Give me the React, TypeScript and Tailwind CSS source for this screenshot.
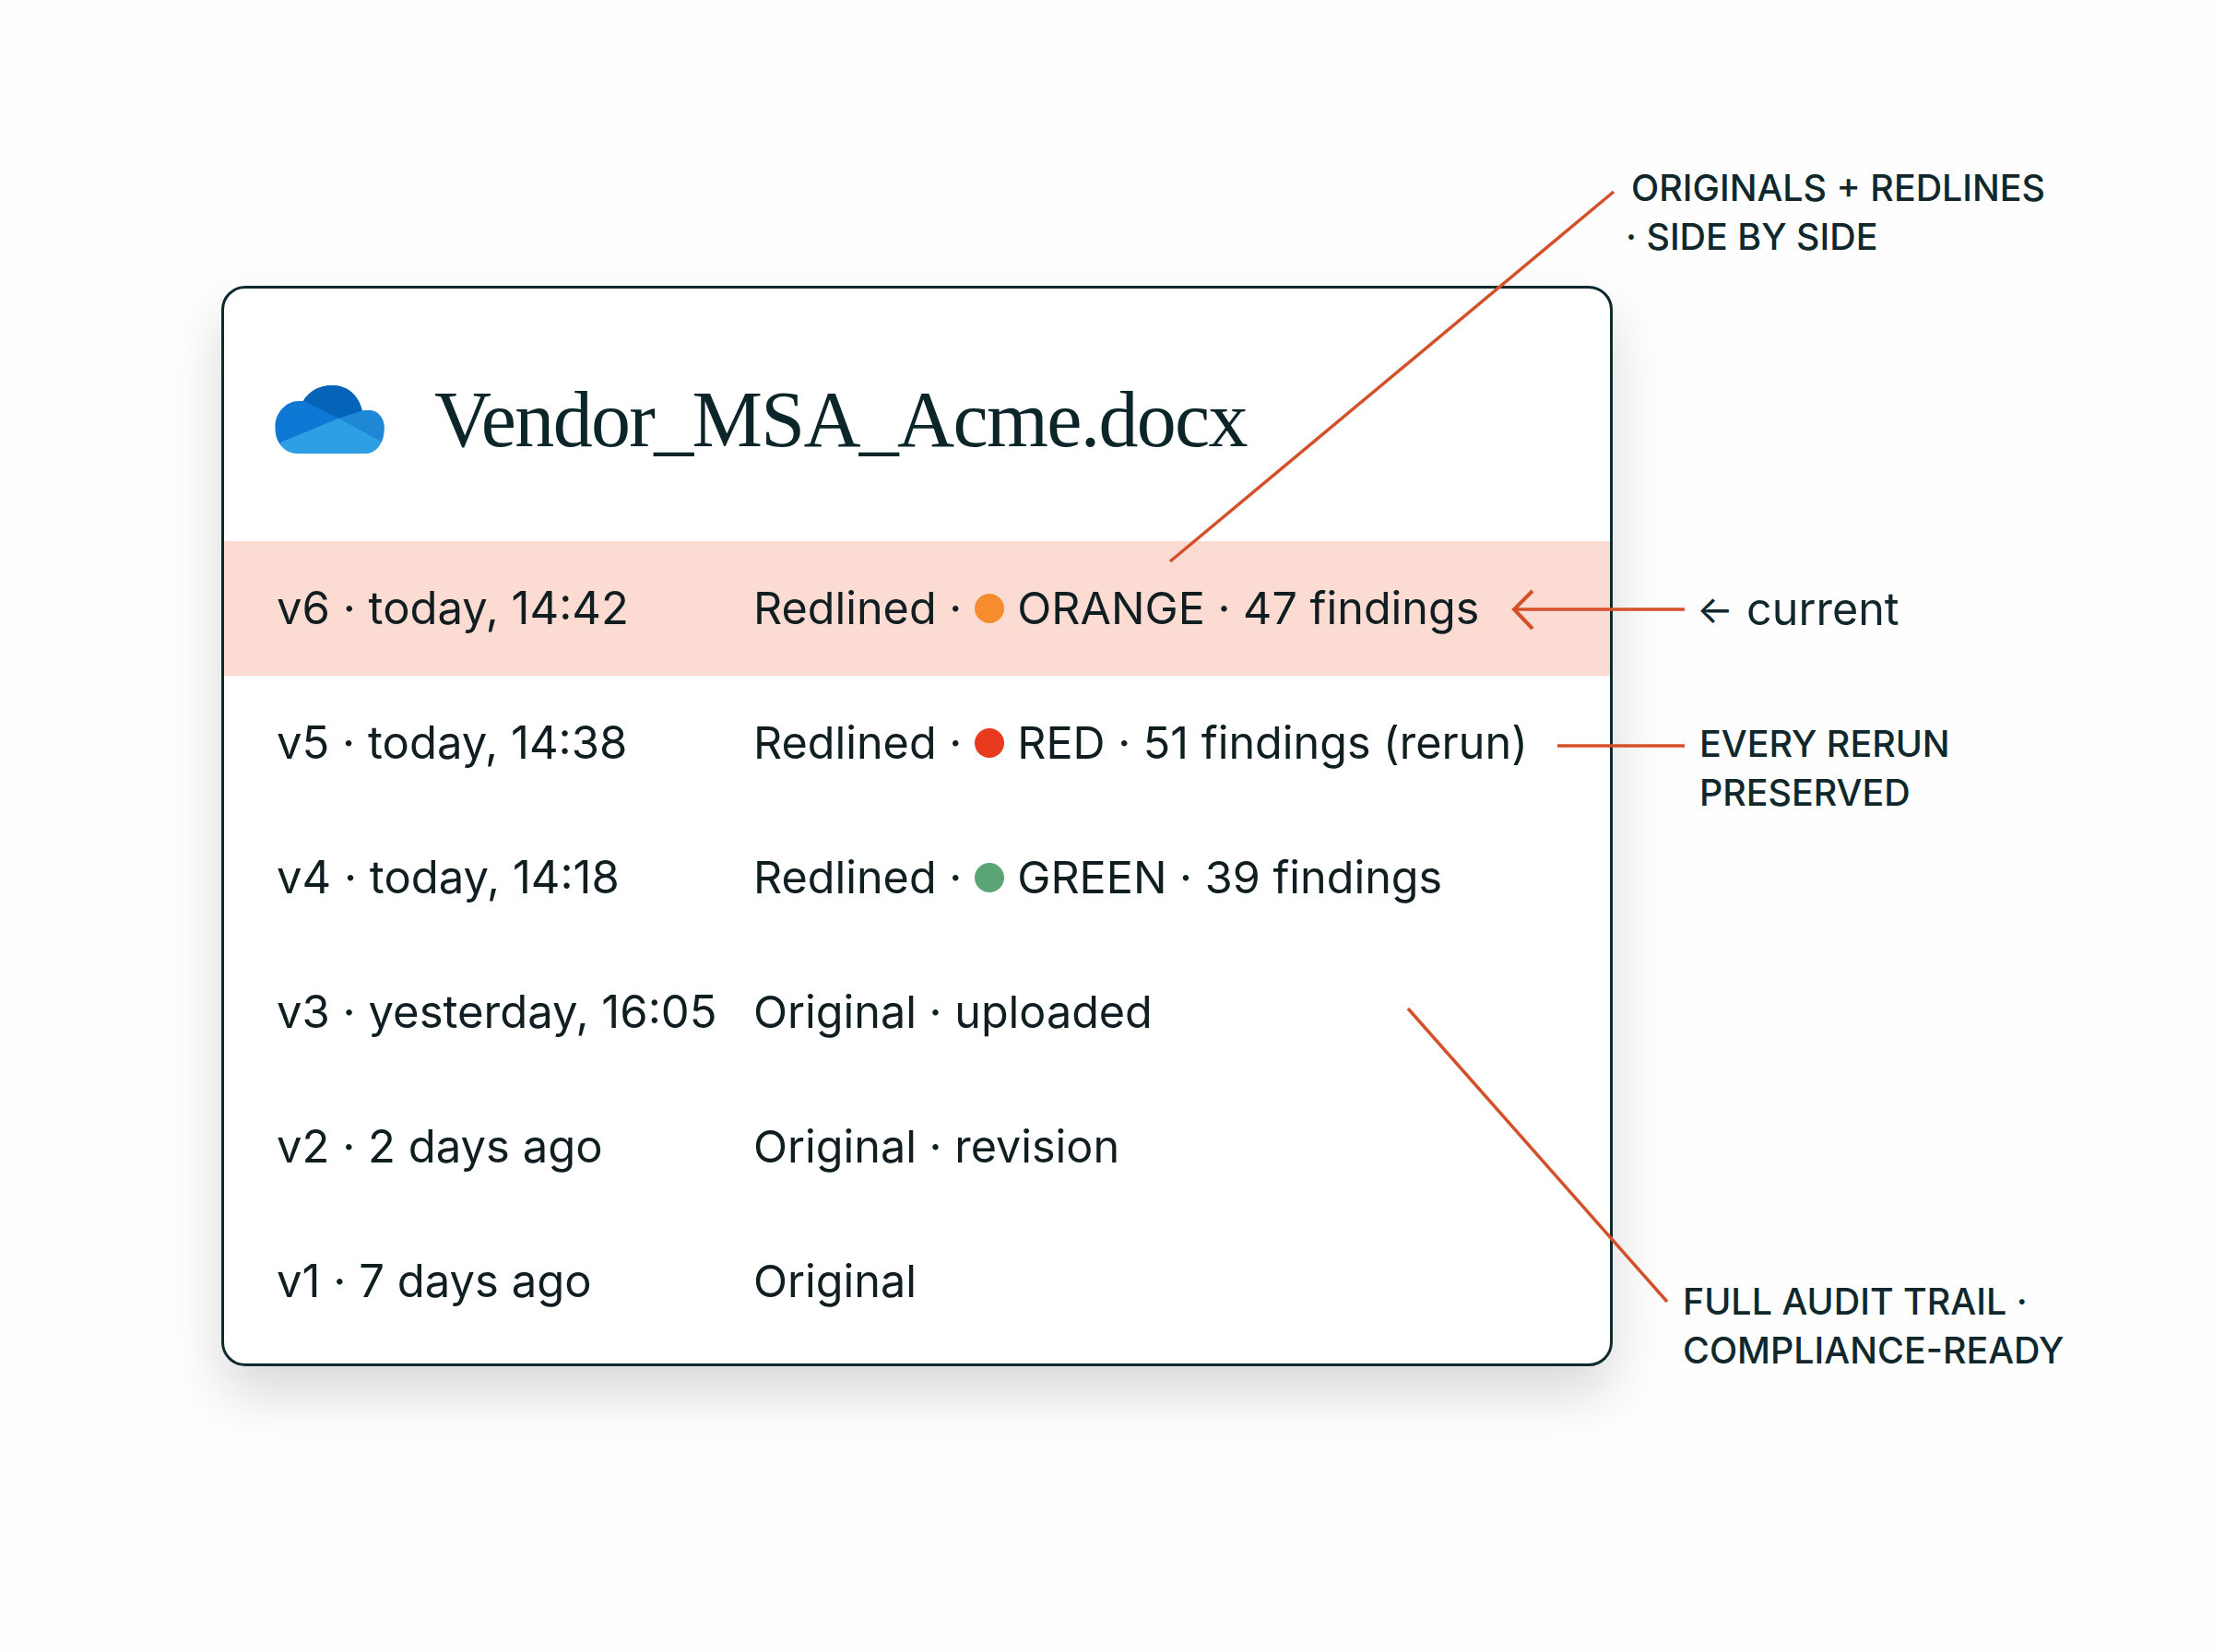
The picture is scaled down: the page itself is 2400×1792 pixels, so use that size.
import React from 'react';

const ROWS = [
  { when: 'v6 · today, 14:42', what: 'Redlined ·', dot: 'bg-[#f68c2e]', rest: 'ORANGE · 47 findings', current: true },
  { when: 'v5 · today, 14:38', what: 'Redlined ·', dot: 'bg-[#e83a1e]', rest: 'RED · 51 findings (rerun)' },
  { when: 'v4 · today, 14:18', what: 'Redlined ·', dot: 'bg-[#5ba475]', rest: 'GREEN · 39 findings' },
  { when: 'v3 · yesterday, 16:05', what: 'Original · uploaded' },
  { when: 'v2 · 2 days ago', what: 'Original · revision' },
  { when: 'v1 · 7 days ago', what: 'Original' },
];

const CloudLogo = () => (
  <svg viewBox="58 52 357 223" className="w-[119px] h-[74px] shrink-0">
    <defs>
      <clipPath id="cloud">
        <path d="M150 103C170 70 205 52 245 52C295 52 332 85 343 135C352 133 358 133 365 133C395 133 415 160 415 190C415 240 390 275 350 275L135 275C90 275 58 240 58 190C58 140 95 103 135 103C140 103 145 103 150 103Z" />
      </clipPath>
    </defs>
    <g clipPath="url(#cloud)">
      <rect x="50" y="40" width="380" height="240" fill="#0f78d4" />
      <polygon points="150,103 267,160 343,135 343,40 150,40" fill="#0364b8" />
      <polygon points="343,135 267,160 408,237 430,237 430,120" fill="#1f88d6" />
      <polygon points="78,237 267,160 408,237 430,290 50,290" fill="#2f9fe4" />
    </g>
  </svg>
);

const Row = ({ row }: { row: (typeof ROWS)[number] }) => (
  <div className={`h-[146px] flex items-center pl-[57px] text-[#101e22] ${row.current ? 'bg-[#fcdcd2]' : ''}`}>
    <div className="w-[517px] shrink-0 whitespace-nowrap text-[49px]">{row.when}</div>
    <div className="flex items-center whitespace-nowrap text-[48.5px]">
      <span>{row.what}</span>
      {row.dot && <span className={`w-[32px] h-[32px] rounded-full mx-[14px] ${row.dot}`} />}
      {row.rest && <span>{row.rest}</span>}
    </div>
  </div>
);

export default function App() {
  return (
    <div className="relative w-[2400px] h-[1792px] overflow-hidden bg-[#fefefe] pt-[310px] pl-[240px] font-['Inter',sans-serif]">
      {/* card */}
      <div className="w-[1509px] h-[1172px] bg-white border-[3.5px] border-[#0f2a2e] rounded-[26px] overflow-hidden shadow-[0_30px_60px_rgba(0,0,0,0.15)]">
        <div className="h-[274px] flex items-center pl-[55px] pt-[10px] gap-[54px]">
          <CloudLogo />
          <h1 className="font-['Liberation_Serif',serif] text-[86px] leading-none tracking-[-1.7px] text-[#0c2529] whitespace-nowrap">
            Vendor_MSA_Acme.docx
          </h1>
        </div>
        {ROWS.map((row) => (
          <Row key={row.when} row={row} />
        ))}
      </div>

      {/* callout lines */}
      <svg viewBox="0 0 2400 1792" className="absolute inset-0 w-[2400px] h-[1792px]" fill="none" stroke="#d4502a" strokeWidth={3.5}>
        <path d="M1269 609L1750 208" />
        <path d="M1827 661H1644" />
        <path d="M1662 641L1642 661L1662 682" strokeWidth={4} />
        <path d="M1689 809H1827" />
        <path d="M1527 1094L1808 1412" />
      </svg>

      {/* notes */}
      <div className="absolute left-[1769px] top-[178px] text-[39.4px] leading-[53px] font-medium text-[#10282c] whitespace-nowrap">
        ORIGINALS + REDLINES
        <div className="-ml-[6px]">· SIDE BY SIDE</div>
      </div>
      <div className="absolute left-[1840px] top-[631px] flex items-center gap-[14px] text-[48.5px] leading-[60px] text-[#10282c] whitespace-nowrap">
        <span className="text-[42px]">←</span>
        <span>current</span>
      </div>
      <div className="absolute left-[1843px] top-[781px] text-[39.4px] leading-[53px] font-medium text-[#10282c] whitespace-nowrap">
        EVERY RERUN
        <br />
        PRESERVED
      </div>
      <div className="absolute left-[1825px] top-[1386px] text-[39.4px] leading-[53px] font-medium text-[#10282c] whitespace-nowrap">
        FULL AUDIT TRAIL ·
        <br />
        COMPLIANCE-READY
      </div>
    </div>
  );
}
